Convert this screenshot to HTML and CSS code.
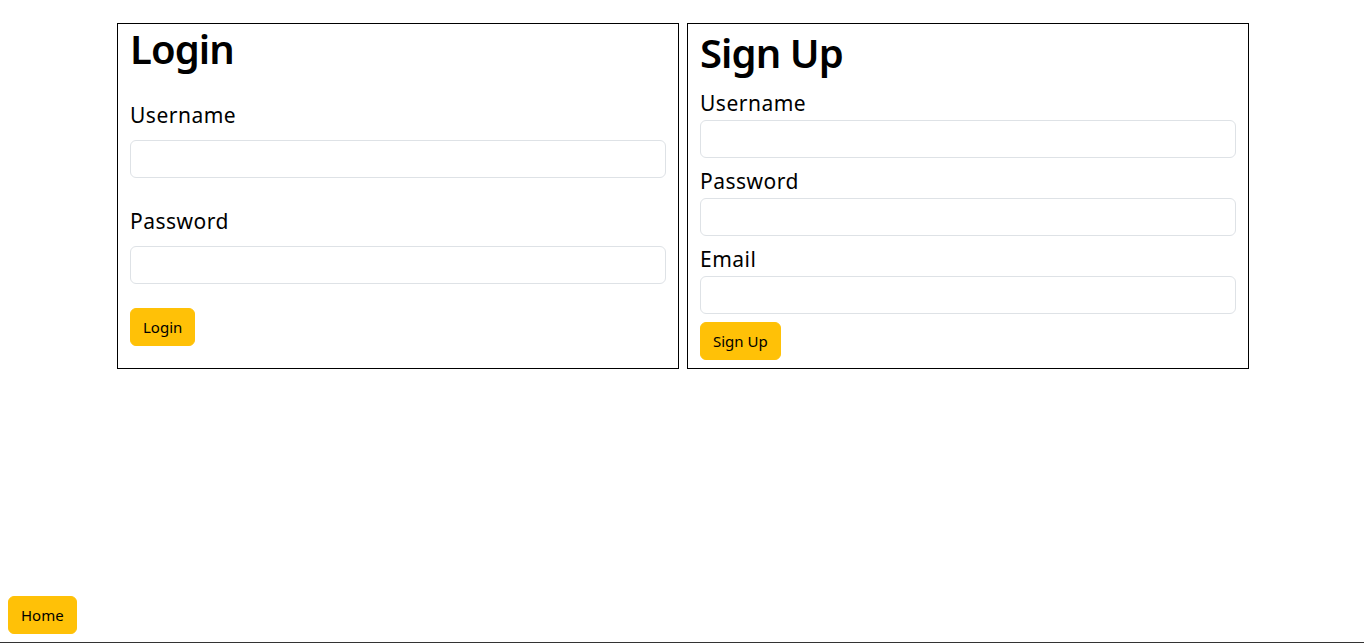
FILE: index.html
```html
<!DOCTYPE html>
<html lang="en">
<head>
<meta charset="utf-8">
<title>Login / Sign Up</title>
<link rel="stylesheet" href="styles.css">
</head>
<body>
<div class="page">
  <main class="forms">
    <section class="card card-login">
      <h1 class="title">Login</h1>
      <form class="form">
        <div class="group group-login">
          <label class="label label-login" for="lu">Username</label>
          <input class="input" id="lu" type="text">
        </div>
        <div class="group group-login">
          <label class="label label-login" for="lp">Password</label>
          <input class="input" id="lp" type="password">
        </div>
        <button class="btn btn-login" type="button">Login</button>
      </form>
    </section>
    <section class="card card-signup">
      <h1 class="title title-signup">Sign Up</h1>
      <form class="form">
        <div class="group group-signup">
          <label class="label label-signup" for="su">Username</label>
          <input class="input" id="su" type="text">
        </div>
        <div class="group group-signup">
          <label class="label label-signup" for="sp">Password</label>
          <input class="input" id="sp" type="password">
        </div>
        <div class="group group-signup">
          <label class="label label-signup" for="se">Email</label>
          <input class="input" id="se" type="email">
        </div>
        <button class="btn" type="button">Sign Up</button>
      </form>
    </section>
  </main>
  <div class="spacer"></div>
  <footer class="footer">
    <button class="btn btn-home" type="button">Home</button>
  </footer>
  <div class="bottom-line"></div>
</div>
</body>
</html>
```
FILE: styles.css
```css
* { box-sizing: border-box; }

html, body {
  margin: 0;
  padding: 0;
  height: 100%;
}

body {
  font-family: "Noto Sans", "Open Sans", sans-serif;
  color: #000;
  background: #fff;
}

.page {
  min-height: 100vh;
  display: flex;
  flex-direction: column;
}

.forms {
  display: grid;
  grid-template-columns: 562px 562px;
  column-gap: 8px;
  align-items: stretch;
  margin: 23px 0 0 117px;
  align-self: flex-start;
}

.spacer {
  flex: 1 0 auto;
}

.card {
  border: 1px solid #000;
  padding: 1px 12px 8px;
}

.card-signup {
  padding-top: 5px;
}

.title {
  font-size: 40px;
  line-height: 48px;
  font-weight: 600;
  letter-spacing: -0.9px;
  margin: 0 0 27px;
}

.title-signup {
  margin-bottom: 11px;
}

.form {
  display: flex;
  flex-direction: column;
  align-items: flex-start;
}

.group {
  width: 100%;
  display: flex;
  flex-direction: column;
}

.group-login { margin-bottom: 28px; }
.group-login:last-of-type { margin-bottom: 24px; }
.group-signup { margin-bottom: 8px; }

.label {
  font-size: 21px;
  line-height: 30px;
  letter-spacing: 0.5px;
}

.label-login { margin-bottom: 10px; }
.label-signup { margin-bottom: 2px; }

.input {
  width: 100%;
  height: 38px;
  border: 1px solid #dee2e6;
  border-radius: 6px;
  background: #fff;
  font: inherit;
  padding: 6px 12px;
}

.btn {
  font-family: inherit;
  font-size: 15px;
  line-height: 24px;
  height: 38px;
  padding: 6px 12px;
  border: 1px solid #ffc107;
  border-radius: 6px;
  background: #ffc107;
  color: #000;
}

.footer {
  display: flex;
  padding: 0 0 8px 8px;
}

.bottom-line {
  height: 1px;
  background: #333;
}
```
